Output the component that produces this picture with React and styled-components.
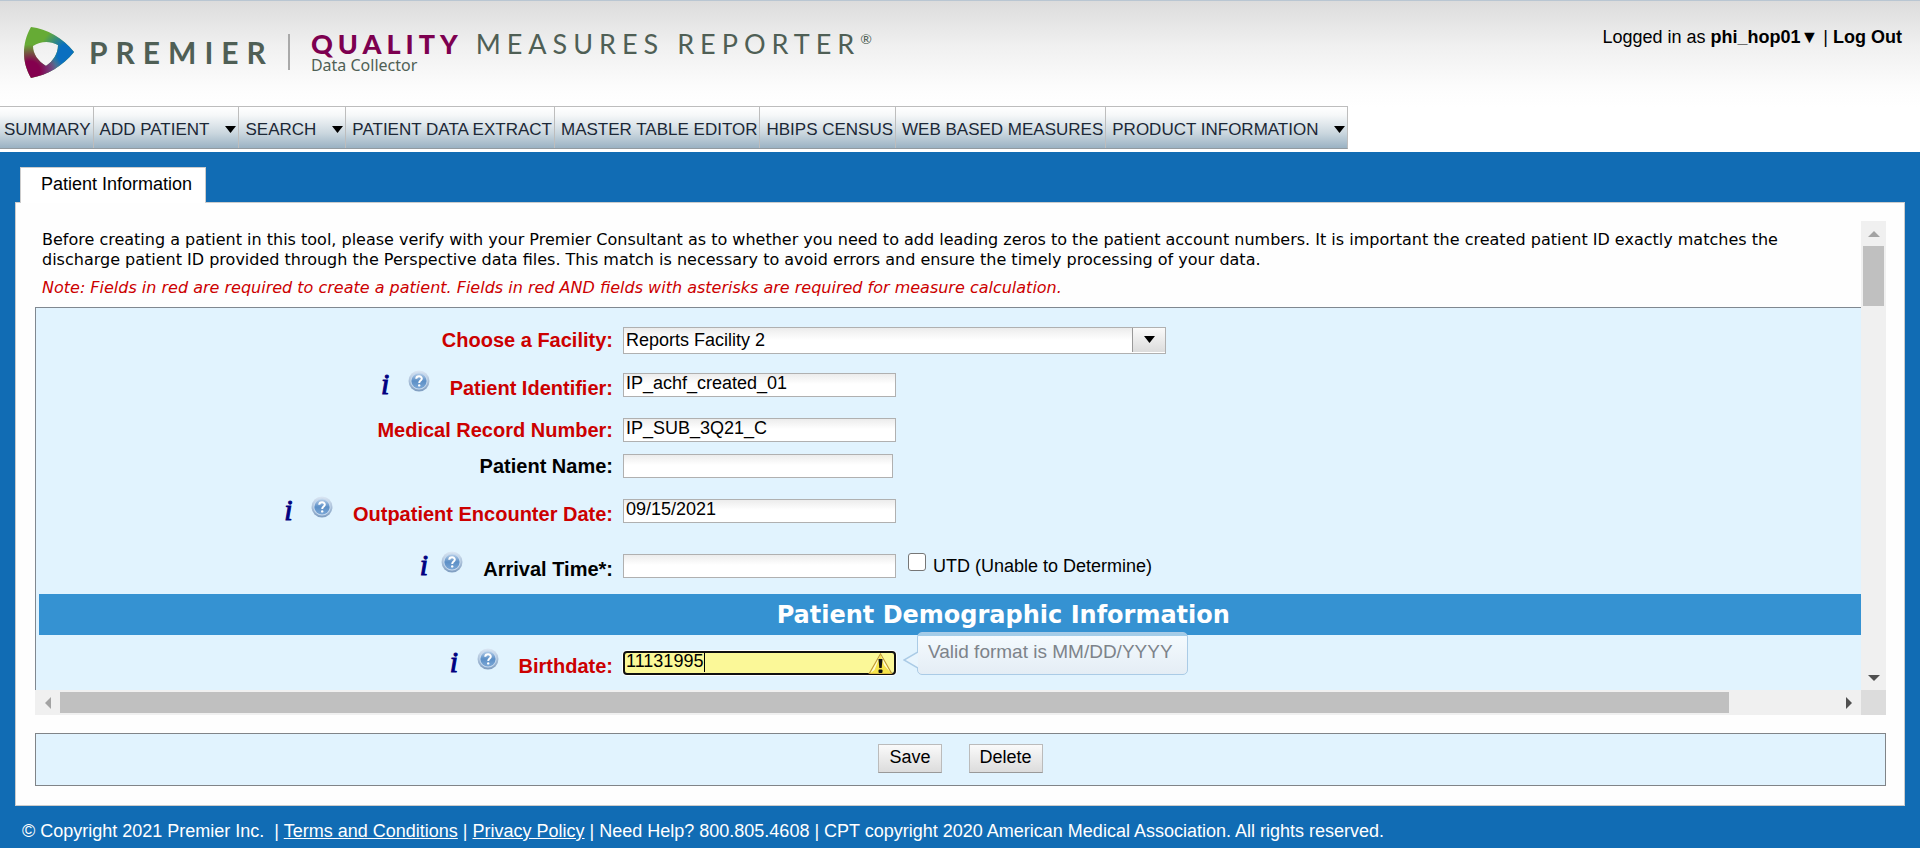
import React from 'react';
import styled, { createGlobalStyle } from 'styled-components';

const sans = '"Liberation Sans", Arial, sans-serif';
const wide = '"DejaVu Sans", Verdana, sans-serif';

const GlobalStyle = createGlobalStyle`
  *, *::before, *::after { box-sizing: border-box; }
  html { min-height: 100%; background: #116cb4; }
  body { margin: 0; font-family: ${sans}; font-size: 18px; color: #000; }
`;

const Header = styled.header`
  background: linear-gradient(#dcdcdc, #f0f0f0 45px, #fcfcfc 85px, #fff 106px);
  border-top: 1px solid #b9c6d2;
  border-bottom: 3px solid #fff;
`;

const TopRow = styled.div`
  display: flex;
  justify-content: space-between;
  align-items: flex-start;
  height: 105px;
  padding: 26px 18px 0 24px;
`;

const Brand = styled.div`
  display: flex;
  align-items: flex-start;
  color: #4f5f55;
  font-family: Lato, sans-serif;
  white-space: nowrap;
`;

const Company = styled.span`
  margin: 15px 0 0 15px;
  font-size: 30px;
  line-height: 20px;
  font-weight: 700;
  letter-spacing: 8px;
`;

const Divider = styled.span`
  width: 2px;
  height: 36px;
  margin: 7px 21px 0 14px;
  background: #a9a9a9;
`;

const Product = styled.div`
  display: flex;
  flex-direction: column;
  padding-top: 7px;
`;

const ProductName = styled.span`
  font-size: 27px;
  line-height: 20px;
  letter-spacing: 6px;

  b {
    color: #7d0050;
    font-weight: 900;
    letter-spacing: 5px;
  }

  sup {
    font-size: 14px;
    line-height: 0;
    letter-spacing: 0;
  }
`;

const ProductSub = styled.span`
  font-family: "Noto Sans", sans-serif;
  font-size: 16px;
  line-height: 22px;
`;

const Account = styled.div`
  line-height: 20px;
  white-space: nowrap;
`;

const AccountButton = styled.button`
  padding: 0;
  border: 0;
  background: none;
  font: inherit;
  font-weight: 700;
  color: inherit;
`;

const AccountLink = styled.a`
  font-weight: 700;
  color: inherit;
  text-decoration: none;
`;

const Nav = styled.nav`
  display: flex;
  width: max-content;
  height: 43px;
  border: solid #bdbdbd;
  border-width: 1px 1px 1px 0;
  border-bottom-color: #929ba1;
  background: linear-gradient(#fff, #f6f8f9 8px, #cbd7df 26px, #9ab2c3);
`;

const NavLink = styled.a`
  display: flex;
  align-items: center;
  gap: 16px;
  padding: 4px 2px 0 6px;
  border-left: 1px solid #bdbdbd;
  font-size: 17px;
  color: #1c2836;
  text-decoration: none;
  white-space: nowrap;

  &:first-child {
    border-left: 0;
    padding-left: 4px;
  }
`;

const Main = styled.main`
  padding: 15px 15px 0;
  background: #116cb4;
`;

const Tab = styled.button`
  display: block;
  height: 36px;
  margin: 0 0 -1px 5px;
  padding: 0 13px 3px 20px;
  border: 1px solid #ccc;
  border-bottom: 0;
  background: #fff;
  font: inherit;
  position: relative;
`;

const Panel = styled.section`
  padding: 18px 18px 19px 19px;
  border: 1px solid #ccc;
  background: #fefefe;
`;

const Scroller = styled.div`
  display: grid;
  grid-template-columns: minmax(0, 1fr) 25px;
  grid-template-rows: auto 25px;
`;

const Viewport = styled.div`
  overflow: hidden;
`;

const Track = styled.div`
  display: flex;
  flex-direction: ${p => (p.$vertical ? 'column' : 'row')};
  background: #f0f0f0;
`;

const TrackEnd = styled.span`
  flex: 0 0 25px;
  display: flex;
  align-items: center;
  justify-content: center;
`;

const TrackRoom = styled.span`
  flex: 1;
  display: flex;
  padding: ${p => (p.$vertical ? '0 2px' : '2px 0')};
`;

const Thumb = styled.span`
  width: ${p => p.$width};
  height: ${p => p.$height};
  background: #c0c0c0;
`;

const Corner = styled.div`
  background: #dcdcdc;
`;

const Intro = styled.div`
  padding: 9px 7px;
  font-family: ${wide};
  font-size: 16px;
  line-height: 20px;

  p { margin: 0; }
`;

const Note = styled.p`
  && { margin-top: 8px; }
  font-style: italic;
  color: #c00;
`;

const Form = styled.form`
  width: 106%;
  padding: 17px 3px 12px;
  border: solid #808890;
  border-width: 1px 0 0 1px;
  background: #e1f3fe;
`;

const Row = styled.div`
  display: grid;
  grid-template-columns: 574px minmax(0, 1fr);
  column-gap: 10px;
  align-items: center;
  height: 30px;
  margin-top: ${p => p.$space || 0}px;
`;

const LabelCell = styled.div`
  display: flex;
  justify-content: flex-end;
  align-items: flex-start;
`;

const Label = styled.label`
  padding-top: ${p => (p.$hinted ? 6 : 0)}px;
  font-size: 20px;
  line-height: 24px;
  font-weight: 700;
  color: ${p => (p.$required ? '#c00' : '#000')};
`;

const HintButton = styled.button`
  display: flex;
  padding: 0;
  border: 0;
  background: none;
  margin-right: ${p => p.$after}px;
`;

const InfoGlyph = styled.span`
  width: 9px;
  font: italic 400 30px/28px "Liberation Serif", serif;
  color: #000080;
  -webkit-text-stroke: 1px #000080;
`;

const Controls = styled.div`
  display: flex;
  align-items: center;
  position: relative;
`;

const TextInput = styled.input`
  width: ${p => (p.$short ? 270 : 273)}px;
  height: 24px;
  padding: 0 2px 3px;
  border: 1px solid #b0b0b0;
  border-radius: 0;
  background: linear-gradient(#ececec, #fff 10px);
  font: 18px ${sans};
  color: #000;
  outline: none;
`;

const WarningInput = styled(TextInput)`
  padding: 0 28px 3px 1px;
  border: 2px solid #101010;
  border-radius: 4px;
  background: #fbf898;
  box-shadow: 0 0 0 1px #fff;
`;

const Warning = styled.svg`
  position: absolute;
  left: 245px;
  top: 2px;
`;

const Caret = styled.span`
  position: absolute;
  left: 81px;
  top: 2px;
  width: 1px;
  height: 19px;
  background: #000;
`;

const SelectBox = styled.div`
  position: relative;
  width: 543px;
  height: 27px;
`;

const Select = styled.select`
  appearance: none;
  width: 100%;
  height: 100%;
  padding: 0 36px 1px 2px;
  border: 1px solid #b0b0b0;
  border-radius: 0;
  background: linear-gradient(#ececec, #fff 12px);
  font: 18px ${sans};
  color: #000;
`;

const SelectArrow = styled.span`
  position: absolute;
  top: 1px;
  right: 1px;
  bottom: 2px;
  width: 33px;
  display: flex;
  align-items: center;
  justify-content: center;
  border-left: 1px solid #999;
  background: linear-gradient(#fafafa, #dcdcdc);
  pointer-events: none;
`;

const CheckLabel = styled.label`
  display: flex;
  align-items: center;
  gap: 7px;
  margin-left: 12px;

  input {
    appearance: none;
    width: 18px;
    height: 18px;
    margin: 0 0 8px;
    border: 1px solid #767676;
    border-radius: 3px;
    background: #fff;
  }
`;

const Band = styled.h2`
  margin: 13px 0;
  padding-top: 1px;
  font: 700 24px/40px ${wide};
  color: #fff;
  background: #3592d2;
  text-align: center;
`;

const Tip = styled.div`
  position: absolute;
  left: 294px;
  top: -19px;
  height: 43px;
  padding: 0 14px 4px 10px;
  display: flex;
  align-items: center;
  border: 1px solid #aacbe6;
  border-radius: 5px;
  background: linear-gradient(#a3cce8 3px, #f4fafe 3px, #e4edf5);
  font-size: 19px;
  color: #7d838a;
  white-space: nowrap;
`;

const TipPoint = styled.svg`
  position: absolute;
  left: -15px;
  top: 18px;
`;

const Actions = styled.div`
  display: flex;
  justify-content: center;
  gap: 27px;
  margin-top: 18px;
  padding: 10px 0 12px;
  border: 1px solid #808488;
  background: #e1f3fe;
`;

const ActionButton = styled.button`
  height: 29px;
  padding: 0 10px 3px;
  border: 1px solid #bbb;
  border-bottom-color: #999;
  background: linear-gradient(#fafafa, #dcdcdc);
  font: 18px ${sans};
  color: #000;
`;

const Footer = styled.footer`
  padding: 15px 22px 7px;
  line-height: 20px;
  color: #fff;
  background: #116cb4;

  a { color: inherit; }
`;

const DownArrow = () => (
  <svg width="11" height="7" viewBox="0 0 11 7" aria-hidden="true">
    <path d="M0 0h11L5.5 7z" fill="#000" />
  </svg>
);

const turns = { up: 0, right: 90, down: 180, left: 270 };
const ScrollArrow = ({ to, color }) => (
  <svg width="12" height="12" viewBox="0 0 12 12" aria-hidden="true">
    <path d="M0 9L6 3L12 9z" fill={color} transform={`rotate(${turns[to]} 6 6)`} />
  </svg>
);

const ring =
  'M7 0C23 2 39 11 50 25C39 39 23 48 7 51C2 42 0 34 0 26C0 17 2 9 7 0zM9 19C9 27 14 34 22 39C29 34 34 27 34 18C26 14 17 14 9 19z';

const Emblem = () => (
  <svg width="50" height="51" viewBox="0 0 50 51" aria-hidden="true">
    <defs>
      <radialGradient id="blue" gradientUnits="userSpaceOnUse" cx="46" cy="28" r="34">
        <stop offset="0.35" stopColor="#0a6fc0" />
        <stop offset="0.9" stopColor="#0a6fc0" stopOpacity="0" />
      </radialGradient>
      <radialGradient id="slate" gradientUnits="userSpaceOnUse" cx="24" cy="44" r="16">
        <stop offset="0.3" stopColor="#6a6396" />
        <stop offset="1" stopColor="#6a6396" stopOpacity="0" />
      </radialGradient>
      <radialGradient id="plum" gradientUnits="userSpaceOnUse" cx="6" cy="44" r="28">
        <stop offset="0.35" stopColor="#84004e" />
        <stop offset="0.95" stopColor="#84004e" stopOpacity="0" />
      </radialGradient>
    </defs>
    <path d={ring} fillRule="evenodd" fill="#66ab35" />
    <path d={ring} fillRule="evenodd" fill="url(#blue)" />
    <path d={ring} fillRule="evenodd" fill="url(#slate)" />
    <path d={ring} fillRule="evenodd" fill="url(#plum)" />
  </svg>
);

const HelpIcon = () => (
  <svg width="22" height="22" viewBox="0 0 22 22" aria-hidden="true">
    <defs>
      <linearGradient id="ball" x1="0" y1="0" x2="0" y2="1">
        <stop offset="0" stopColor="#b4cde8" />
        <stop offset="0.5" stopColor="#5c8fc6" />
        <stop offset="1" stopColor="#7ba7d6" />
      </linearGradient>
      <linearGradient id="rim" x1="0" y1="0" x2="0" y2="1">
        <stop offset="0" stopColor="#dbe7f4" />
        <stop offset="1" stopColor="#7d9cc0" />
      </linearGradient>
    </defs>
    <circle cx="11" cy="11" r="10.5" fill="url(#rim)" />
    <circle cx="11" cy="11" r="8.6" fill="#c6d9ee" />
    <circle cx="11" cy="11" r="7.6" fill="url(#ball)" />
    <path d="M8.2 8.8C8.4 5.4 14 5.6 13.8 8.8C13.7 10.6 11.2 10.6 11.2 13" fill="none" stroke="#fff" strokeWidth="2" />
    <circle cx="11.2" cy="15.4" r="1.2" fill="#fff" />
  </svg>
);

const WarningIcon = () => (
  <Warning width="25" height="21" viewBox="0 0 25 21" aria-hidden="true">
    <path d="M12.5 1L24 21H1z" fill="#f6e44a" stroke="#c09a3a" strokeWidth="1.2" />
    <path d="M12.5 2L6.500 17L2.500 20L12.500 2L22 19L16 12z" fill="#fdfbd0" />
    <path d="M10.5 6h4l-.8 9h-2.4z" fill="#111" />
    <rect x="10.5" y="16.5" width="4" height="3.5" rx="1" fill="#111" />
  </Warning>
);

function Field({ id, label, required, hinted, near, space, children }) {
  return (
    <Row $space={space}>
      <LabelCell>
        {hinted && (
          <>
            <HintButton type="button" $after={near ? 13 : 18} aria-label={`About ${label}`}>
              <InfoGlyph>i</InfoGlyph>
            </HintButton>
            <HintButton type="button" $after={20} aria-label={`Help for ${label}`}>
              <HelpIcon />
            </HintButton>
          </>
        )}
        <Label htmlFor={id} $required={required} $hinted={hinted}>{label}:</Label>
      </LabelCell>
      <Controls>{children}</Controls>
    </Row>
  );
}

const navItems = [
  { text: 'SUMMARY' },
  { text: 'ADD PATIENT', menu: true },
  { text: 'SEARCH', menu: true },
  { text: 'PATIENT DATA EXTRACT' },
  { text: 'MASTER TABLE EDITOR' },
  { text: 'HBIPS CENSUS' },
  { text: 'WEB BASED MEASURES' },
  { text: 'PRODUCT INFORMATION', menu: true },
];

export default function App() {
  return (
    <>
      <GlobalStyle />
      <Header>
        <TopRow>
          <Brand>
            <Emblem />
            <Company>PREMIER</Company>
            <Divider />
            <Product>
              <ProductName><b>QUALITY</b> MEASURES REPORTER<sup>®</sup></ProductName>
              <ProductSub>Data Collector</ProductSub>
            </Product>
          </Brand>
          <Account>
            Logged in as <AccountButton type="button">phi_hop01▼</AccountButton> | <AccountLink href="#logout">Log Out</AccountLink>
          </Account>
        </TopRow>
        <Nav>
          {navItems.map(item => (
            <NavLink key={item.text} href="#">
              {item.text}
              {item.menu && <DownArrow />}
            </NavLink>
          ))}
        </Nav>
      </Header>

      <Main>
        <Tab type="button">Patient Information</Tab>
        <Panel>
          <Scroller>
            <Viewport>
              <Intro>
                <p>
                  Before creating a patient in this tool, please verify with your Premier Consultant as to whether you need to add leading zeros to the patient account numbers. It is important the created patient ID exactly matches the discharge patient ID provided through the Perspective data files. This match is necessary to avoid errors and ensure the timely processing of your data.
                </p>
                <Note>
                  Note: Fields in red are required to create a patient. Fields in red AND fields with asterisks are required for measure calculation.
                </Note>
              </Intro>
              <Form>
                <Field id="facility" label="Choose a Facility" required>
                  <SelectBox>
                    <Select id="facility" defaultValue="2">
                      <option value="2">Reports Facility 2</option>
                    </Select>
                    <SelectArrow><DownArrow /></SelectArrow>
                  </SelectBox>
                </Field>
                <Field id="identifier" label="Patient Identifier" required hinted space={15}>
                  <TextInput id="identifier" defaultValue="IP_achf_created_01" />
                </Field>
                <Field id="record" label="Medical Record Number" required space={15}>
                  <TextInput id="record" defaultValue="IP_SUB_3Q21_C" />
                </Field>
                <Field id="name" label="Patient Name" space={6}>
                  <TextInput id="name" $short />
                </Field>
                <Field id="encounter" label="Outpatient Encounter Date" required hinted space={15}>
                  <TextInput id="encounter" defaultValue="09/15/2021" />
                </Field>
                <Field id="arrival" label="Arrival Time*" hinted near space={25}>
                  <TextInput id="arrival" />
                  <CheckLabel><input type="checkbox" />UTD (Unable to Determine)</CheckLabel>
                </Field>
                <Band>Patient Demographic Information</Band>
                <Field id="birthdate" label="Birthdate" required hinted>
                  <WarningInput id="birthdate" defaultValue="11131995" />
                  <Caret />
                  <WarningIcon />
                  <Tip role="tooltip">
                    <TipPoint width="15" height="18" viewBox="0 0 15 18" aria-hidden="true">
                      <path d="M15 1L1 9L15 17" fill="#e9f5fd" stroke="#aacbe6" strokeWidth="1.5" />
                    </TipPoint>
                    Valid format is MM/DD/YYYY
                  </Tip>
                </Field>
              </Form>
            </Viewport>
            <Track $vertical>
              <TrackEnd><ScrollArrow to="up" color="#a3a3a3" /></TrackEnd>
              <TrackRoom $vertical><Thumb $width="100%" $height="60px" /></TrackRoom>
              <TrackEnd><ScrollArrow to="down" color="#505050" /></TrackEnd>
            </Track>
            <Track>
              <TrackEnd><ScrollArrow to="left" color="#a3a3a3" /></TrackEnd>
              <TrackRoom><Thumb $width="94%" $height="100%" /></TrackRoom>
              <TrackEnd><ScrollArrow to="right" color="#505050" /></TrackEnd>
            </Track>
            <Corner />
          </Scroller>
          <Actions>
            <ActionButton type="button">Save</ActionButton>
            <ActionButton type="button">Delete</ActionButton>
          </Actions>
        </Panel>
      </Main>

      <Footer>
        © Copyright 2021 Premier Inc. &nbsp;| <a href="#terms">Terms and Conditions</a> | <a href="#privacy">Privacy Policy</a> | Need Help? 800.805.4608 | CPT copyright 2020 American Medical Association. All rights reserved.
      </Footer>
    </>
  );
}
